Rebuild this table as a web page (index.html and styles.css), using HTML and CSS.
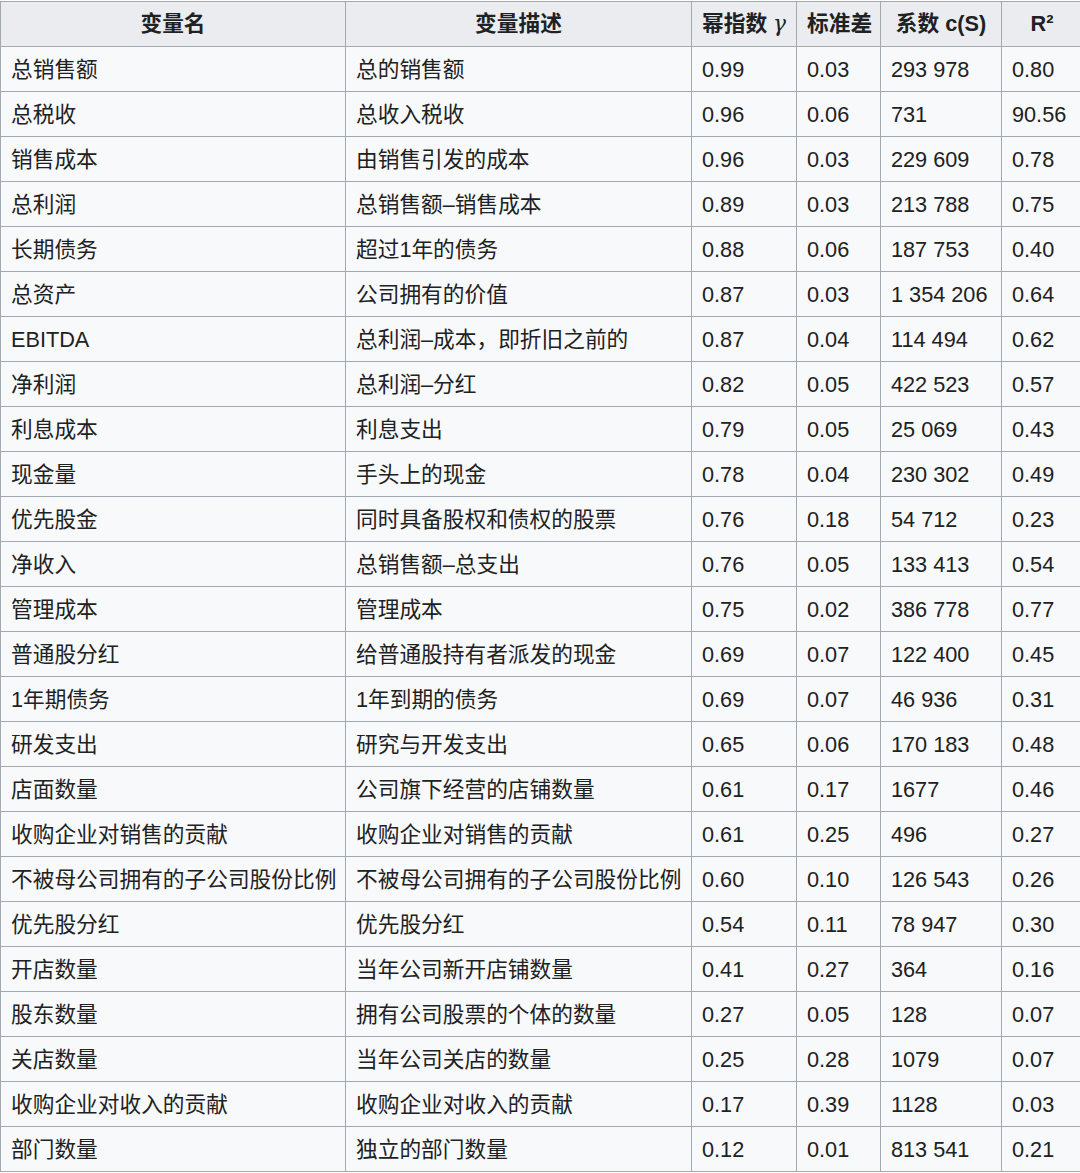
FILE: index.html
```html
<!DOCTYPE html>
<html lang="zh-CN">
<head>
<meta charset="utf-8">
<title>变量表</title>
<link rel="stylesheet" href="styles.css">
</head>
<body>
<table class="wikitable">
<colgroup>
<col class="c1"><col class="c2"><col class="c3"><col class="c4"><col class="c5"><col class="c6">
</colgroup>
<thead>
<tr><th>变量名</th><th>变量描述</th><th>幂指数 <span class="math">γ</span></th><th>标准差</th><th>系数 c(S)</th><th>R²</th></tr>
</thead>
<tbody>
<tr><td>总销售额</td><td>总的销售额</td><td>0.99</td><td>0.03</td><td>293 978</td><td>0.80</td></tr>
<tr><td>总税收</td><td>总收入税收</td><td>0.96</td><td>0.06</td><td>731</td><td>90.56</td></tr>
<tr><td>销售成本</td><td>由销售引发的成本</td><td>0.96</td><td>0.03</td><td>229 609</td><td>0.78</td></tr>
<tr><td>总利润</td><td>总销售额–销售成本</td><td>0.89</td><td>0.03</td><td>213 788</td><td>0.75</td></tr>
<tr><td>长期债务</td><td>超过1年的债务</td><td>0.88</td><td>0.06</td><td>187 753</td><td>0.40</td></tr>
<tr><td>总资产</td><td>公司拥有的价值</td><td>0.87</td><td>0.03</td><td>1 354 206</td><td>0.64</td></tr>
<tr><td>EBITDA</td><td>总利润–成本，即折旧之前的</td><td>0.87</td><td>0.04</td><td>114 494</td><td>0.62</td></tr>
<tr><td>净利润</td><td>总利润–分红</td><td>0.82</td><td>0.05</td><td>422 523</td><td>0.57</td></tr>
<tr><td>利息成本</td><td>利息支出</td><td>0.79</td><td>0.05</td><td>25 069</td><td>0.43</td></tr>
<tr><td>现金量</td><td>手头上的现金</td><td>0.78</td><td>0.04</td><td>230 302</td><td>0.49</td></tr>
<tr><td>优先股金</td><td>同时具备股权和债权的股票</td><td>0.76</td><td>0.18</td><td>54 712</td><td>0.23</td></tr>
<tr><td>净收入</td><td>总销售额–总支出</td><td>0.76</td><td>0.05</td><td>133 413</td><td>0.54</td></tr>
<tr><td>管理成本</td><td>管理成本</td><td>0.75</td><td>0.02</td><td>386 778</td><td>0.77</td></tr>
<tr><td>普通股分红</td><td>给普通股持有者派发的现金</td><td>0.69</td><td>0.07</td><td>122 400</td><td>0.45</td></tr>
<tr><td>1年期债务</td><td>1年到期的债务</td><td>0.69</td><td>0.07</td><td>46 936</td><td>0.31</td></tr>
<tr><td>研发支出</td><td>研究与开发支出</td><td>0.65</td><td>0.06</td><td>170 183</td><td>0.48</td></tr>
<tr><td>店面数量</td><td>公司旗下经营的店铺数量</td><td>0.61</td><td>0.17</td><td>1677</td><td>0.46</td></tr>
<tr><td>收购企业对销售的贡献</td><td>收购企业对销售的贡献</td><td>0.61</td><td>0.25</td><td>496</td><td>0.27</td></tr>
<tr><td>不被母公司拥有的子公司股份比例</td><td>不被母公司拥有的子公司股份比例</td><td>0.60</td><td>0.10</td><td>126 543</td><td>0.26</td></tr>
<tr><td>优先股分红</td><td>优先股分红</td><td>0.54</td><td>0.11</td><td>78 947</td><td>0.30</td></tr>
<tr><td>开店数量</td><td>当年公司新开店铺数量</td><td>0.41</td><td>0.27</td><td>364</td><td>0.16</td></tr>
<tr><td>股东数量</td><td>拥有公司股票的个体的数量</td><td>0.27</td><td>0.05</td><td>128</td><td>0.07</td></tr>
<tr><td>关店数量</td><td>当年公司关店的数量</td><td>0.25</td><td>0.28</td><td>1079</td><td>0.07</td></tr>
<tr><td>收购企业对收入的贡献</td><td>收购企业对收入的贡献</td><td>0.17</td><td>0.39</td><td>1128</td><td>0.03</td></tr>
<tr><td>部门数量</td><td>独立的部门数量</td><td>0.12</td><td>0.01</td><td>813 541</td><td>0.21</td></tr>
</tbody>
</table>
</body>
</html>
```

FILE: styles.css
```css
html, body {
  margin: 0;
  padding: 0;
  background: #ffffff;
}

body {
  padding-top: 1px;
  overflow: hidden;
}

.wikitable {
  border-collapse: collapse;
  table-layout: fixed;
  width: 1082px;
  background: #f8f9fa;
  color: #202122;
  font-family: "Liberation Sans", "Noto Sans CJK SC", sans-serif;
  font-size: 21.7px;
  border: 1px solid #a2a9b1;
}

.c1 { width: 345px; }
.c2 { width: 346px; }
.c3 { width: 105px; }
.c4 { width: 84px; }
.c5 { width: 121px; }
.c6 { width: 81px; }

.wikitable th,
.wikitable td {
  border: 1px solid #a2a9b1;
  height: 45px;
  padding: 0 10px;
  line-height: 32px;
  white-space: nowrap;
  box-sizing: border-box;
  overflow: hidden;
}

.wikitable th {
  background: #eaecf0;
  font-weight: bold;
  text-align: center;
  height: 45px;
}

.wikitable td {
  text-align: left;
  padding-top: 2px;
}

.math {
  font-family: "DejaVu Serif", "Liberation Serif", serif;
  font-style: italic;
  font-weight: normal;
}
```
